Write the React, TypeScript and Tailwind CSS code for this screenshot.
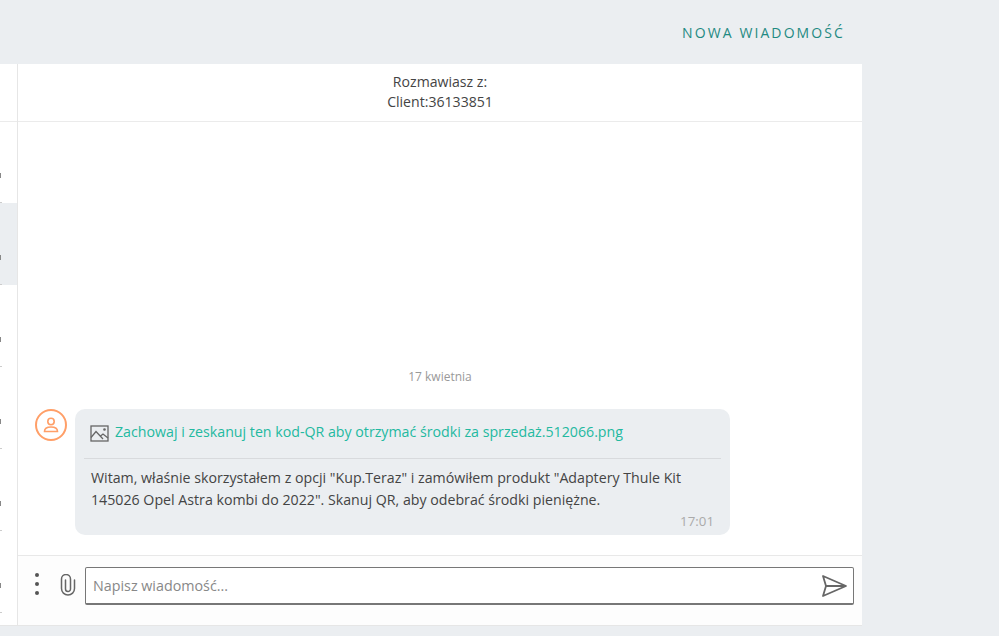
import React from 'react';

const SIDEBAR_ROWS = [false, true, false, false, false, false];

function ImageFileIcon() {
  return (
    <svg width="19" height="17" viewBox="0 0 19 17" fill="none" stroke="#666" strokeWidth="1.3" className="shrink-0">
      <rect x="1" y="1" width="17" height="15" />
      <path d="M1 12.5 L6 6.5 L13 14 M10.5 11 L13 9 L18 13" />
      <circle cx="14.5" cy="4.5" r="0.7" />
    </svg>
  );
}

function UserAvatar() {
  return (
    <div className="w-8 h-8 rounded-full border-2 border-[#ff9f68] flex items-center justify-center shrink-0">
      <svg width="18" height="18" viewBox="0 0 18 18" fill="none" stroke="#ff9f68" strokeWidth="1.6">
        <circle cx="9" cy="5.5" r="3.2" />
        <path d="M2.5 15.5 C2.5 12.5 5 11 9 11 C13 11 15.5 12.5 15.5 15.5 Z" />
      </svg>
    </div>
  );
}

function DotsIcon() {
  return (
    <svg width="6" height="22" viewBox="0 0 6 22" fill="#555" className="shrink-0 ml-4 mt-[6px]">
      <circle cx="3" cy="2" r="2" />
      <circle cx="3" cy="11" r="2" />
      <circle cx="3" cy="20" r="2" />
    </svg>
  );
}

function PaperclipIcon() {
  return (
    <svg width="16" height="22" viewBox="0 0 16 22" fill="none" stroke="#666" strokeWidth="1.5" strokeLinecap="round" className="shrink-0 ml-5 mt-[7px]">
      <path d="M14.5 6 V14.5 a6.5 6.5 0 0 1 -13 0 V5 a4.5 4.5 0 0 1 9 0 V15 a2.5 2.5 0 0 1 -5 0 V6" />
    </svg>
  );
}

function SendIcon() {
  return (
    <svg width="26" height="24" viewBox="0 0 26 24" fill="none" stroke="#666" strokeWidth="1.8" strokeLinejoin="round">
      <path d="M2 2 L25 12 L2 22 L5 12 Z M5 12 L25 12" />
    </svg>
  );
}

export default function App() {
  return (
    <div className="h-[636px] w-[999px] overflow-hidden bg-[#ebeef1] font-['Open_Sans',sans-serif] text-[#444]">
      {/* Top bar */}
      <div className="h-16 w-[862px] flex items-center justify-end pr-[17px]">
        <span className="text-sm tracking-[0.15em] text-[#1f8a82] relative top-[1px]">NOWA WIADOMOŚĆ</span>
      </div>

      <div className="w-[862px] h-[562px] bg-white border-b border-[#e6e6e6] flex">
        {/* Conversation list, cut off by the edge of the picture */}
        <div className="w-[18px] shrink-0 border-r border-[#e6e6e6] flex flex-col">
          <div className="h-[58px] shrink-0 border-b border-[#ebebeb]" />
          {SIDEBAR_ROWS.map((selected, index) => (
            <div
              key={index}
              className={`shrink-0 flex flex-col ${index === 0 ? 'h-[81px] pt-[51px]' : 'h-[82px] pt-[52px]'} ${selected ? 'bg-[#ebeef1]' : ''}`}
            >
              <div className="w-px h-[6px] bg-[#888]" />
              <div className="w-[2px] h-px bg-[#ccc] mt-6" />
            </div>
          ))}
        </div>

        {/* Conversation */}
        <div className="flex-1 flex flex-col min-w-0">
          <div className="h-[58px] shrink-0 border-b border-[#ebebeb] flex flex-col items-center justify-center pb-[2px] text-[14.1px] leading-5 text-[#444]">
            <div>Rozmawiasz z:</div>
            <div>Client:36133851</div>
          </div>

          <div className="flex-1 flex flex-col justify-end px-[17px] pb-5 min-h-0">
            <div className="text-center text-xs text-[#999] mb-6">17 kwietnia</div>
            <div className="flex gap-[8px]">
              <UserAvatar />
              <div className="w-[655px] h-[126px] bg-[#ebeef1] rounded-[10px] px-[9px] flex flex-col">
                <div className="h-[50px] shrink-0 border-b border-[#d8dadd] flex items-center gap-[6px] pl-[6px]">
                  <ImageFileIcon />
                  <span className="text-[14.2px] pb-[3px] text-[#23b9a0]">Zachowaj i zeskanuj ten kod-QR aby otrzymać środki za sprzedaż.512066.png</span>
                </div>
                <p className="text-[14.2px] leading-[22px] text-[#444] pl-[7px] pr-2 pt-2">
                  Witam, właśnie skorzystałem z opcji "Kup.Teraz" i zamówiłem produkt "Adaptery Thule Kit 145026 Opel Astra kombi do 2022". Skanuj QR, aby odebrać środki pieniężne.
                </p>
                <div className="text-right text-[13.3px] text-[#aaa] pr-[7px] mt-px">17:01</div>
              </div>
            </div>
          </div>

          {/* Message input */}
          <div className="h-[70px] shrink-0 border-t border-[#e8e8e8] bg-[#fdfdfd] flex items-start pt-[11px] pr-[8px]">
            <DotsIcon />
            <PaperclipIcon />
            <div className="ml-[9px] flex-1 h-[38px] border border-[#777] border-b-2 rounded-[2px] bg-white flex items-center justify-between pl-[7px] pr-[6px]">
              <span className="text-[14.3px] text-[#888]">Napisz wiadomość...</span>
              <SendIcon />
            </div>
          </div>
        </div>
      </div>
    </div>
  );
}
